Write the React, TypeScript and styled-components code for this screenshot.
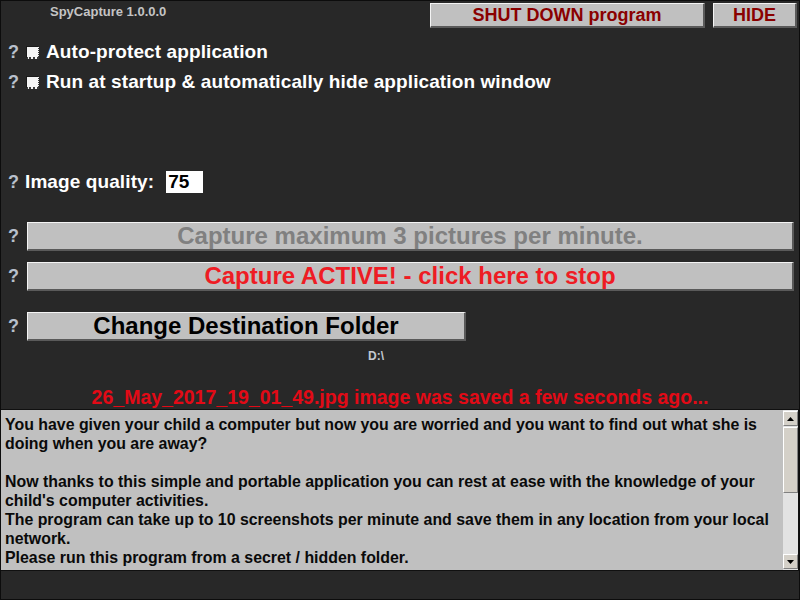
import React from "react";
import styled, { createGlobalStyle } from "styled-components";

const GlobalStyle = createGlobalStyle`
  html, body {
    margin: 0;
    padding: 0;
    background: #282828;
  }
  * {
    box-sizing: border-box;
  }
`;

const Window = styled.div`
  display: flex;
  flex-direction: column;
  width: 800px;
  height: 600px;
  background-color: #282828;
  border: 1px solid #0c0c0c;
  font-family: "Liberation Sans", Arial, sans-serif;
  font-weight: bold;
  overflow: hidden;
`;

const TitleBar = styled.div`
  display: flex;
  justify-content: space-between;
  align-items: flex-start;
  height: 30px;
`;

const Title = styled.span`
  margin-left: 49px;
  margin-top: 3px;
  font-size: 13px;
  color: #c4c4c4;
`;

const TitleButtons = styled.div`
  display: flex;
  gap: 8px;
  margin-top: 2px;
  margin-right: 2px;
`;

const RaisedButton = styled.div<{ $width?: string; $color?: string; $size?: number }>`
  display: flex;
  justify-content: center;
  align-items: center;
  width: ${(p) => p.$width || "100%"};
  height: 100%;
  background-color: #c0c0c0;
  border-top: 1px solid #f4f4f4;
  border-left: 1px solid #f4f4f4;
  border-right: 2px solid #5a5a5a;
  border-bottom: 2px solid #5a5a5a;
  color: ${(p) => p.$color || "#000"};
  font-size: ${(p) => p.$size || 16}px;
  cursor: pointer;
  white-space: nowrap;
`;

const TopButton = styled.div`
  height: 25px;
`;

const OptionRow = styled.div`
  display: flex;
  align-items: center;
  height: 30px;
  padding-left: 7px;
`;

const Help = styled.span`
  width: 18px;
  flex-shrink: 0;
  font-size: 18px;
  color: #b8c0cc;
`;

// white box, dark top/left edge, dotted bottom/right edge
const CheckBox = styled.span`
  flex-shrink: 0;
  width: 13px;
  height: 13px;
  margin-right: 7px;
  margin-top: 1px;
  background: #f4f4f4;
  border-top: 1px solid #1a1a1a;
  border-left: 1px solid #1a1a1a;
  border-right: 1px dotted #3a3a3a;
  border-bottom: 2px dotted #3a3a3a;
`;

const Label = styled.span`
  font-size: 19px;
  letter-spacing: 0.1px;
  color: #ffffff;
  white-space: nowrap;
`;

const QualityRow = styled(OptionRow)`
  margin-top: 70px;
`;

const QualityLabel = styled(Label)`
  margin-left: -1px;
`;

const QualityInput = styled.span`
  display: flex;
  align-items: center;
  width: 37px;
  height: 22px;
  margin-left: 12px;
  padding-left: 2px;
  background: #ffffff;
  color: #000;
  font-size: 19px;
`;

const ActionRow = styled.div<{ $top: number; $fixed?: boolean }>`
  display: flex;
  align-items: center;
  height: 29px;
  margin-top: ${(p) => p.$top}px;
  padding-left: 7px;
  padding-right: 5px;
  & > ${RaisedButton} {
    flex: ${(p) => (p.$fixed ? "none" : "1")};
  }
`;

const ActionHelp = styled(Help)`
  width: 19px;
`;

const FolderPath = styled.div`
  margin-top: 8px;
  padding-left: 367px;
  font-size: 12px;
  line-height: 14px;
  color: #c4c8d0;
`;

const Status = styled.div`
  margin-top: 23px;
  text-align: center;
  font-size: 19.5px;
  line-height: 22px;
  color: #e20a16;
  white-space: nowrap;
`;

const InfoBox = styled.div`
  display: flex;
  height: 162px;
  margin-top: 1px;
  background: #c0c0c0;
  border-top: 1px solid #101010;
  border-bottom: 1px solid #101010;
  border-right: 1px solid #101010;
`;

const InfoText = styled.div`
  flex: 1;
  padding: 5px 6px 0 4px;
  font-size: 15.9px;
  line-height: 19px;
  color: #0a0a0a;
  overflow: hidden;
`;

const ScrollBar = styled.div`
  display: flex;
  flex-direction: column;
  width: 15px;
  padding: 1px 0;
  background: #e2e2e2;
`;

const ArrowButton = styled.div`
  display: flex;
  justify-content: center;
  align-items: center;
  height: 15px;
  background: #d4d0c8;
  border-top: 1px solid #ffffff;
  border-left: 1px solid #ffffff;
  border-right: 1px solid #808080;
  border-bottom: 1px solid #808080;
`;

const Thumb = styled.div`
  height: 66px;
  margin-top: 1px;
  background: #d4d0c8;
  border-top: 1px solid #ffffff;
  border-left: 1px solid #ffffff;
  border-right: 1px solid #808080;
  border-bottom: 1px solid #808080;
`;

const Track = styled.div`
  flex: 1;
`;

const Arrow = ({ down }: { down?: boolean }) => (
  <svg width="7" height="4" viewBox="0 0 7 4">
    <polygon points={down ? "0,0 7,0 3.5,4" : "0,4 7,4 3.5,0"} fill="#000" />
  </svg>
);

const paragraphs = [
  "You have given your child a computer but now you are worried and you want to find out what she is doing when you are away?",
  "",
  "Now thanks to this simple and portable application you can rest at ease with the knowledge of your child's computer activities.",
  "The program can take up to 10 screenshots per minute and save them in any location from your local network.",
  "Please run this program from a secret / hidden folder.",
];

const App = () => {
  return (
    <>
      <GlobalStyle />
      <Window>
        <TitleBar>
          <Title>SpyCapture 1.0.0.0</Title>
          <TitleButtons>
            <TopButton>
              <RaisedButton $width="275px" $color="#8a0000" $size={18}>
                SHUT DOWN program
              </RaisedButton>
            </TopButton>
            <TopButton>
              <RaisedButton $width="84px" $color="#8a0000" $size={18}>
                HIDE
              </RaisedButton>
            </TopButton>
          </TitleButtons>
        </TitleBar>

        <OptionRow style={{ marginTop: 6 }}>
          <Help>?</Help>
          <CheckBox />
          <Label>Auto-protect application</Label>
        </OptionRow>
        <OptionRow>
          <Help>?</Help>
          <CheckBox />
          <Label>Run at startup &amp; automatically hide application window</Label>
        </OptionRow>

        <QualityRow>
          <Help>?</Help>
          <QualityLabel>Image quality:</QualityLabel>
          <QualityInput>75</QualityInput>
        </QualityRow>

        <ActionRow $top={25}>
          <ActionHelp>?</ActionHelp>
          <RaisedButton $color="#808080" $size={24}>
            Capture maximum 3 pictures per minute.
          </RaisedButton>
        </ActionRow>
        <ActionRow $top={11}>
          <ActionHelp>?</ActionHelp>
          <RaisedButton $color="#ee1c24" $size={24}>
            Capture ACTIVE! - click here to stop
          </RaisedButton>
        </ActionRow>
        <ActionRow $top={21} $fixed>
          <ActionHelp>?</ActionHelp>
          <RaisedButton $width="439px" $size={24}>
            Change Destination Folder
          </RaisedButton>
        </ActionRow>

        <FolderPath>D:\</FolderPath>
        <Status>26_May_2017_19_01_49.jpg image was saved a few seconds ago...</Status>

        <InfoBox>
          <InfoText>
            {paragraphs.map((p, i) => (
              <div key={i}>{p || "\u00a0"}</div>
            ))}
          </InfoText>
          <ScrollBar>
            <ArrowButton>
              <Arrow />
            </ArrowButton>
            <Thumb />
            <Track />
            <ArrowButton>
              <Arrow down />
            </ArrowButton>
          </ScrollBar>
        </InfoBox>
      </Window>
    </>
  );
};

export default App;
